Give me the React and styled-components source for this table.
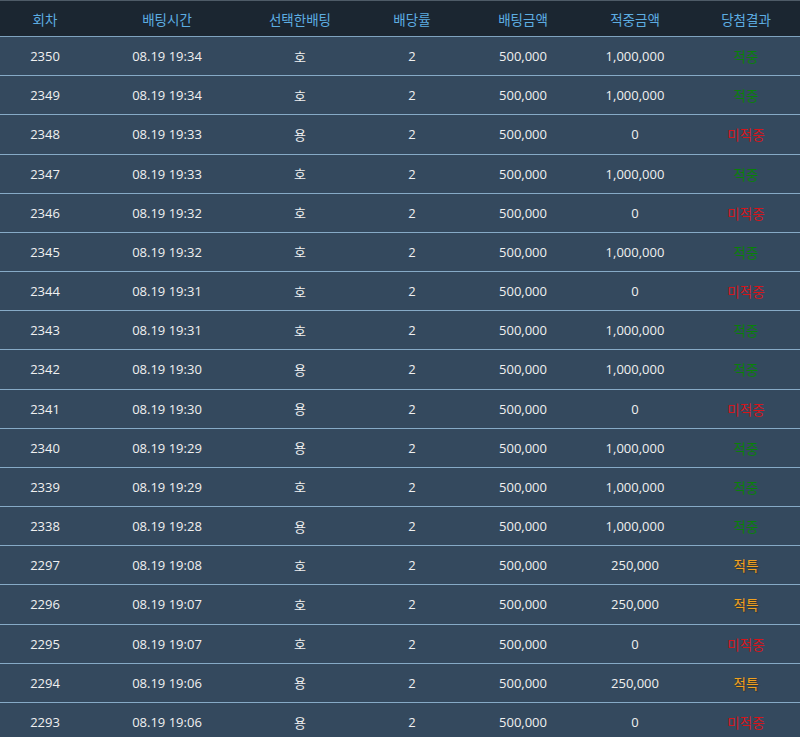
import React from "react";
import styled, { createGlobalStyle } from "styled-components";

const Global = createGlobalStyle`
  html, body { margin: 0; padding: 0; background: #34495e; }
  body { font-family: "Open Sans", "Noto Sans CJK KR", sans-serif; }
`;

const COLS = "90px 154px 112px 112px 110px 114px 108px";

const Table = styled.div`
  width: 800px;
  border-top: 1px solid #4e5b67;
`;

const HeadRow = styled.div`
  display: grid;
  grid-template-columns: ${COLS};
  height: 35px;
  background: #1b2631;
  border-bottom: 1px solid #7fa3bf;
`;

const HeadCell = styled.div`
  display: flex;
  align-items: center;
  justify-content: center;
  color: #5dade2;
  font-size: 13.5px;
  font-family: "Noto Sans CJK KR", sans-serif;
`;

const Row = styled.div`
  display: grid;
  grid-template-columns: ${COLS};
  height: 38.18px;
  background: #34495e;
  border-bottom: 1px solid #86aac6;
`;

const Cell = styled.div`
  display: flex;
  align-items: center;
  justify-content: center;
  color: #f0f0f0;
  font-size: 13px;
  font-family: "Open Sans", "Noto Sans CJK KR", sans-serif;
`;

const RESULT = {
  win: { text: "적중", color: "#0a800a", shadow: "none" },
  lose: { text: "미적중", color: "#d4161c", shadow: "none" },
  special: { text: "적특", color: "#f0a020", shadow: "1px 1px 1px rgba(60,40,0,0.6)" },
};

const Result = styled.span`
  font-family: "Noto Sans CJK KR", sans-serif;
  font-size: 13.5px;
  color: ${(p) => RESULT[p.$kind].color};
  text-shadow: ${(p) => RESULT[p.$kind].shadow};
`;

const heads = ["회차", "배팅시간", "선택한배팅", "배당률", "배팅금액", "적중금액", "당첨결과"];

const rows = [
  ["2350", "08.19 19:34", "호", "1,000,000", "win"],
  ["2349", "08.19 19:34", "호", "1,000,000", "win"],
  ["2348", "08.19 19:33", "용", "0", "lose"],
  ["2347", "08.19 19:33", "호", "1,000,000", "win"],
  ["2346", "08.19 19:32", "호", "0", "lose"],
  ["2345", "08.19 19:32", "호", "1,000,000", "win"],
  ["2344", "08.19 19:31", "호", "0", "lose"],
  ["2343", "08.19 19:31", "호", "1,000,000", "win"],
  ["2342", "08.19 19:30", "용", "1,000,000", "win"],
  ["2341", "08.19 19:30", "용", "0", "lose"],
  ["2340", "08.19 19:29", "용", "1,000,000", "win"],
  ["2339", "08.19 19:29", "호", "1,000,000", "win"],
  ["2338", "08.19 19:28", "용", "1,000,000", "win"],
  ["2297", "08.19 19:08", "호", "250,000", "special"],
  ["2296", "08.19 19:07", "호", "250,000", "special"],
  ["2295", "08.19 19:07", "호", "0", "lose"],
  ["2294", "08.19 19:06", "용", "250,000", "special"],
  ["2293", "08.19 19:06", "용", "0", "lose"],
];

const Kr = styled.span`
  font-family: "Noto Sans CJK KR", sans-serif;
`;

export default function App() {
  return (
    <>
      <Global />
      <Table>
        <HeadRow>
          {heads.map((h) => (
            <HeadCell key={h}>{h}</HeadCell>
          ))}
        </HeadRow>
        {rows.map(([no, time, pick, hit, res]) => (
          <Row key={no}>
            <Cell>{no}</Cell>
            <Cell>{time}</Cell>
            <Cell><Kr>{pick}</Kr></Cell>
            <Cell>2</Cell>
            <Cell>500,000</Cell>
            <Cell>{hit}</Cell>
            <Cell><Result $kind={res}>{RESULT[res].text}</Result></Cell>
          </Row>
        ))}
      </Table>
    </>
  );
}
